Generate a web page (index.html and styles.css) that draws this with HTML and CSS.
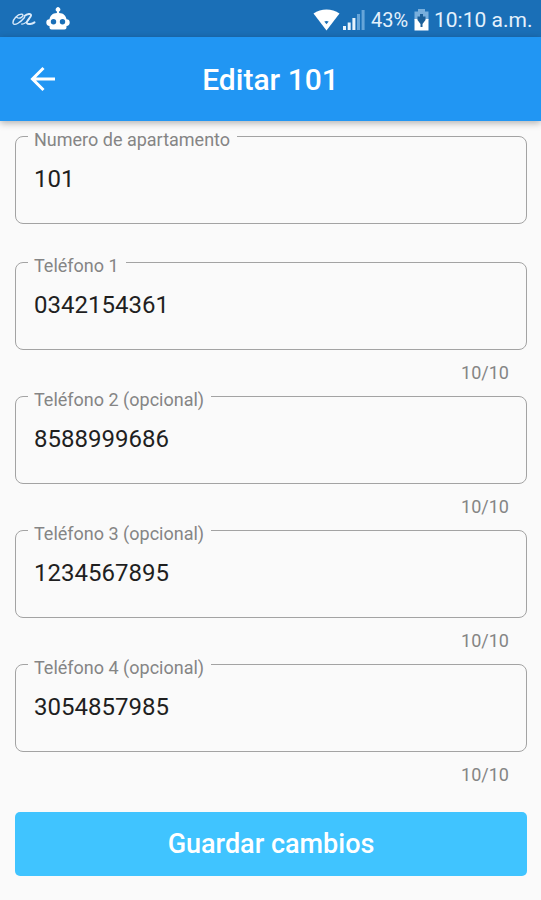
FILE: index.html
```html
<!DOCTYPE html>
<html lang="es">
<head>
<meta charset="utf-8">
<title>Editar 101</title>
<link rel="stylesheet" href="styles.css">
</head>
<body>
<div class="status">
  <svg class="swirl" width="24" height="16" viewBox="0 0 24 16" fill="none" stroke="#d9eafa" stroke-linecap="round"><path stroke-width="1.4" d="M5 5.500C8 7.500 13 3.500 10 2.200C6 1.500 0 8 1.200 11.500C2.400 14 8 11 12.500 5.500"/><path stroke-width="2" d="M12.500 4C15 2 19.500 1 19 3.500C18.500 6 14 9 15 11.200C16 12.800 20 12 22.500 10.300"/><path stroke-width="1.200" d="M9.500 12C12 12.300 14.500 10.500 17 7"/></svg>
  <svg class="robot" width="24" height="24" viewBox="0 0 24 24"><path fill="#fff" fill-rule="evenodd" d="M10.900 6V4.400a2.200 2.200 0 1 1 2.200 0V6C17.500 6 20 9 20.500 12.300C22.500 12.300 23.700 13.500 23.700 15.500S22.500 18.900 20.500 19V20.500Q20.500 22.500 18.500 22.500H5.500Q3.500 22.500 3.500 20.500V19C1.500 18.900.3 17.500.3 15.500S1.500 12.300 3.500 12.300C4 9 6.500 6 10.900 6ZM7.500 12a2.700 2.700 0 1 0 0 5.400a2.700 2.700 0 0 0 0-5.400ZM16.500 12a2.700 2.700 0 1 0 0 5.400a2.700 2.700 0 0 0 0-5.400Z"/></svg>
  <svg class="wifi" width="27" height="22" viewBox="0 0 27 22"><path fill="#fff" d="M.5 4.500C8-1 19-1 26.500 4.500L13.500 21.500Z"/><path fill="#1b6fb5" d="M11.300 12.500Q13.500 11.300 15.700 12.500L13.500 15.200Z"/></svg>
  <svg class="signal" width="22" height="22" viewBox="0 0 22 22"><path fill="#e8f3fc" d="M0 17h3v4H0zM4.700 13.500h3V21h-3zM9.400 9h3v12h-3z"/><path fill="#66a5d9" d="M14 5h3v16h-3zM18.600 1h3v20h-3z"/></svg>
  <span class="percent">43%</span>
  <svg class="battery" width="15" height="22" viewBox="0 0 15 22"><path fill="#78afdd" d="M4 0h7v2.500h3.500V11H.5V2.500H4z"/><path fill="#fff" d="M.5 10h14v11.500H.5z"/><path fill="#1b5f99" d="M3.500 7.500H6V5h3v2.500h2.500V11L8.500 15v3h-2v-3L3.500 11z"/></svg>
  <time class="clock">10:10 a.m.</time>
</div>
<header class="bar">
  <svg class="back" width="26" height="26" viewBox="0 0 26 26" fill="none" stroke="#fff" stroke-width="3"><path d="M25 13H3M13.500 2L2.500 13L13.500 24"/></svg>
  <h1>Editar 101</h1>
</header>
<main>
  <fieldset class="field first"><legend>Numero de apartamento</legend><div class="value">101</div></fieldset>
  <fieldset class="field"><legend>Teléfono 1</legend><div class="value">0342154361</div></fieldset>
  <div class="counter">10/10</div>
  <fieldset class="field"><legend>Teléfono 2 (opcional)</legend><div class="value">8588999686</div></fieldset>
  <div class="counter">10/10</div>
  <fieldset class="field"><legend>Teléfono 3 (opcional)</legend><div class="value">1234567895</div></fieldset>
  <div class="counter">10/10</div>
  <fieldset class="field"><legend>Teléfono 4 (opcional)</legend><div class="value">3054857985</div></fieldset>
  <div class="counter">10/10</div>
  <button class="save">Guardar cambios</button>
</main>
</body>
</html>
```
FILE: styles.css
```css
* { box-sizing: border-box; }
body {
  margin: 0;
  height: 900px;
  overflow: hidden;
  background: #fafafa;
  font-family: Roboto, sans-serif;
  color: #1f1f1f;
}
.status {
  display: flex;
  align-items: center;
  height: 37px;
  padding: 2px 8px 0 12px;
  background: #1a6fb7;
  color: #e4f1fc;
}
svg { flex: none; }
.robot { margin: -2px 0 0 10px; }
.wifi { margin-left: auto; }
.signal { margin: 0 6px 0 3px; }
.percent { width: 38px; font-size: 20px; }
.battery { margin: 0 5px 0 5px; }
.clock { width: 99px; font-size: 21px; white-space: nowrap; }
.bar {
  position: relative;
  display: grid;
  grid-template-columns: 56px 1fr 56px;
  align-items: center;
  height: 84px;
  background: #2196f3;
  color: #fff;
  box-shadow: 0 2px 7px rgba(0, 0, 0, .3);
}
.back { margin-left: 30px; }
h1 {
  margin: 0;
  font-size: 30px;
  font-weight: 500;
  text-align: center;
}
main { padding: 3px 14px 0 15px; }
.field {
  min-width: 0;
  height: 100px;
  margin: 0;
  padding: 0 18px 0 12px;
  border: 1.500px solid #a3a3a3;
  border-radius: 8px;
}
.field.first { margin-bottom: 26px; }
legend {
  height: 24px;
  padding: 7px 7px 0 6px;
  font-size: 18px;
  line-height: 17px;
  color: #858585;
}
.value {
  padding: 17px 0 0 6px;
  font-size: 24px;
  line-height: 28px;
}
.counter {
  height: 34px;
  padding: 12px 18px 0 0;
  font-size: 18px;
  line-height: 22px;
  text-align: right;
  color: #858585;
}
.save {
  display: block;
  width: 100%;
  height: 64px;
  margin-top: 26px;
  padding: 0;
  border: 0;
  border-radius: 5px;
  background: #40c4ff;
  color: #fff;
  font: 500 27px/64px Roboto, sans-serif;
}
```
